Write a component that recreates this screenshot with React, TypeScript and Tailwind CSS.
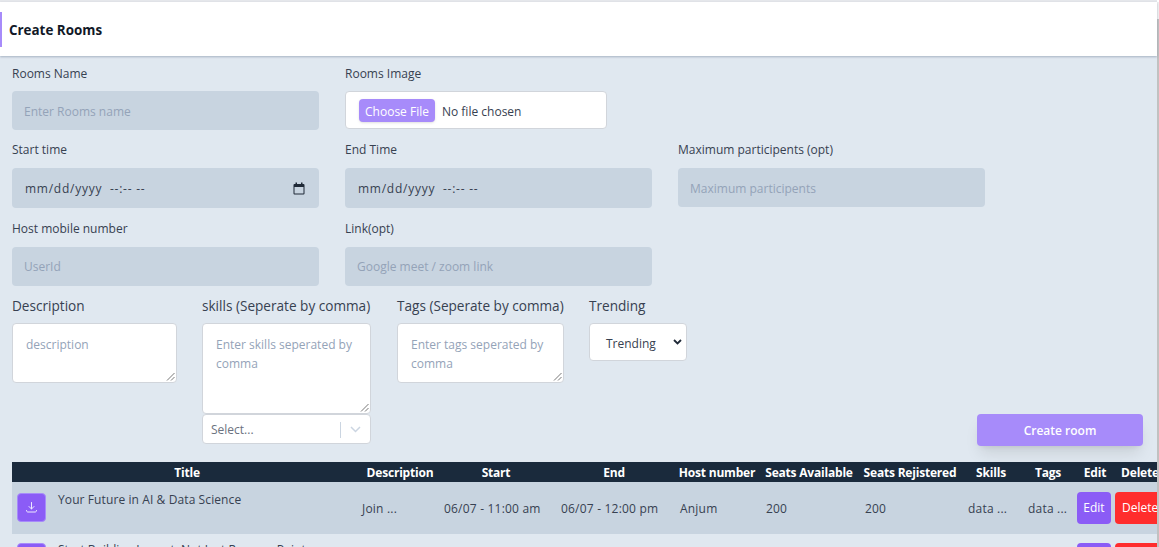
const labelCls = "block pt-[1px] -mb-[1px] text-[12px] leading-[18px] text-[#374151] whitespace-nowrap";
const inputCls = "rounded bg-[#c8d4e0] flex items-center px-3 text-[12px] text-[#94a3b8]";

const Field = ({ label, value, gap = "mt-[9px]", nudge = "pt-[3px]" }: { label: string; value: string; gap?: string; nudge?: string }) => (
  <div className="w-[307px]">
    <label className={labelCls}>{label}</label>
    <div className={`${gap} h-[39px] ${inputCls} ${nudge}`}>{value}</div>
  </div>
);

const DateField = ({ label, icon }: { label: string; icon?: boolean }) => (
  <div className="w-[307px]">
    <label className={labelCls}>{label}</label>
    <div className="mt-[10px] h-[40px] rounded bg-[#c8d4e0] flex items-center justify-between pl-[13px] pr-[14px] text-[12px] tracking-[0.75px] text-[#374151] whitespace-pre">
      <span className="pt-[2px]">mm/dd/yyyy  --:-- --</span>
      {icon && (
        <svg width="12" height="13" viewBox="0 0 12 13" fill="#1f2937">
          <path d="M2.500 0.500h1.500v1.500h4V0.500h1.500v1.500h1a1 1 0 0 1 1 1v8.500a1 1 0 0 1-1 1h-9a1 1 0 0 1-1-1V3a1 1 0 0 1 1-1h1zM1.500 5v6.500h9V5z" />
        </svg>
      )}
    </div>
  </div>
);

const TextArea = ({ label, placeholder, width, height }: { label: string; placeholder: string; width: string; height: string }) => (
  <div className={width}>
    <label className="block text-[13.600px] leading-[20px] text-[#374151] whitespace-nowrap">{label}</label>
    <div className={`relative mt-[7px] ${height} rounded bg-white border border-[#d1d5db] px-[13px] py-[11px] text-[12px] leading-[19px] text-[#94a3b8]`}>
      {placeholder}
      <svg className="absolute right-[1px] bottom-[1px]" width="9" height="9" viewBox="0 0 9 9" stroke="#555" strokeWidth="0.8">
        <path d="M1 8.500L8.500 1M5 8.500L8.500 5" />
      </svg>
    </div>
  </div>
);

const columns = [
  { name: "Title", width: "w-[350px]" },
  { name: "Description", width: "w-[76px]" },
  { name: "Start", width: "w-[116px]" },
  { name: "End", width: "w-[120px]" },
  { name: "Host number", width: "w-[86px]" },
  { name: "Seats Available", width: "w-[98px]" },
  { name: "Seats Rejistered", width: "w-[104px]" },
  { name: "Skills", width: "w-[58px]" },
  { name: "Tags", width: "w-[56px]" },
  { name: "Edit", width: "w-[38px]" },
  { name: "Delete", width: "w-[52px]" },
];

const cellCls = "shrink-0 pt-[2px] text-[12px] tracking-[0.2px] text-[#374151]";

const DownloadIcon = () => (
  <div className="w-[29px] h-[29px] rounded bg-[#8b5cf6] border border-[#a78bfa] flex items-center justify-center">
    <svg width="13" height="13" viewBox="0 0 13 13" fill="none" stroke="#ede9fe" strokeWidth="1" strokeLinecap="round" strokeLinejoin="round">
      <path d="M6.500 1.500v6.500M4 5.500l2.500 2.500 2.500-2.500M1.500 9.500c0 1 .5 1.500 1.500 1.500h7c1 0 1.500-.5 1.500-1.500" />
    </svg>
  </div>
);

export default function App() {
  return (
    <div className="relative h-[547px] w-[1159px] overflow-hidden bg-white font-['Open_Sans','Noto_Sans',sans-serif]">
      <div className="h-[2px] w-[1157px] bg-[#e5e7eb]" />
      <div className="h-[54px] w-[1157px] flex items-center bg-white shadow-[0_1px_2px_rgba(100,116,139,0.45)] relative z-10">
        <div className="h-[35px] w-[2px] bg-[#a78bfa] mr-[7px]" />
        <h1 className="text-[13.400px] font-bold text-[#111827] pt-[3px]">Create Rooms</h1>
      </div>
      <div className="h-[491px] w-[1157px] bg-[#e0e8f0] overflow-hidden">
        <div className="flex gap-[26px] pl-[12px] pt-[8px]">
          <Field label="Rooms Name" value="Enter Rooms name" />
          <div className="w-[262px]">
            <label className={labelCls}>Rooms Image</label>
            <div className="mt-[9px] h-[38px] rounded bg-white border border-[#d1d5db] flex items-center pl-[13px] pt-[1px] text-[12px] text-[#374151]">
              <span className="h-[23px] w-[76px] justify-center rounded-sm bg-[#a78bfa] pt-[2px] text-white flex items-center shadow-sm">Choose File</span>
              <span className="ml-[7px] pt-[2px]">No file chosen</span>
            </div>
          </div>
        </div>
        <div className="flex gap-[26px] pl-[12px] pt-[10px]">
          <DateField label="Start time" icon />
          <DateField label="End Time" />
          <Field label="Maximum participents (opt)" value="Maximum participents" gap="mt-[10px]" />
        </div>
        <div className="flex gap-[26px] pl-[12px] pt-[11px]">
          <Field label="Host mobile number" value="UserId" gap="mt-[10px]" nudge="pt-[1px]" />
          <Field label="Link(opt)" value="Google meet / zoom link" gap="mt-[10px]" nudge="pt-[1px]" />
        </div>
        <div className="flex pl-[12px] pt-[10px] h-[176px] relative">
          <TextArea label="Description" placeholder="description" width="w-[165px]" height="h-[60px]" />
          <div className="ml-[25px] w-[169px]">
            <TextArea label="skills (Seperate by comma)" placeholder="Enter skills seperated by comma" width="w-[169px]" height="h-[91px]" />
            <div className="h-[30px] rounded bg-white border border-[#d1d5db] flex items-center pl-[8px] pt-[1px] text-[12px] text-[#6b7280]">
              <span className="flex-1">Select...</span>
              <div className="h-[16px] w-px bg-[#cbd5e1]" />
              <svg className="mx-[9px]" width="11" height="7" viewBox="0 0 11 7" fill="none" stroke="#cbd5e1" strokeWidth="1.500">
                <path d="M1 1l4.500 4.500L10 1" />
              </svg>
            </div>
          </div>
          <TextArea label="Tags (Seperate by comma)" placeholder="Enter tags seperated by comma" width="ml-[26px] w-[167px]" height="h-[60px]" />
          <div className="ml-[25px] w-[98px]">
            <label className="block text-[13.600px] leading-[20px] text-[#374151]">Trending</label>
            <div className="mt-[7px] h-[38px] rounded bg-white border border-[#d1d5db] flex items-center pl-[16px] pr-[4px] justify-between text-[12px] text-[#374151]">
              <span className="pt-[3px]">Trending</span>
              <svg width="9" height="6" viewBox="0 0 9 6" fill="none" stroke="#1f2937" strokeWidth="1.800">
                <path d="M1 1l3.500 3.500L8 1" />
              </svg>
            </div>
          </div>
          <button className="absolute right-[14px] top-[128px] w-[166px] h-[32px] rounded bg-[#a78bfa] pt-[1px] text-white text-[12px] font-semibold shadow-lg">
            Create room
          </button>
        </div>
        <div className="ml-[12px] w-[1145px] overflow-hidden">
          <div className="flex h-[20px] bg-[#1a2a3c] items-center pt-[1px] text-[12px] font-bold tracking-[-0.2px] text-white whitespace-nowrap">
            {columns.map((col) => (
              <div key={col.name} className={`${col.width} shrink-0 text-center`}>{col.name}</div>
            ))}
          </div>
          <div className="flex h-[52px] bg-[#c8d4e0] items-center whitespace-nowrap">
            <div className="w-[350px] shrink-0 pl-[5px] flex gap-[12px] self-start pt-[11px]">
              <DownloadIcon />
              <span className="text-[12px] tracking-[0.1px] text-[#374151] -mt-[2px]">Your Future in AI & Data Science</span>
            </div>
            <div className={`${cellCls} w-[76px]`}>Join ...</div>
            <div className={`${cellCls} w-[116px] pl-[6px]`}>06/07 - 11:00 am</div>
            <div className={`${cellCls} w-[120px] pl-[7px]`}>06/07 - 12:00 pm</div>
            <div className={`${cellCls} w-[86px] pl-[6px]`}>Anjum</div>
            <div className={`${cellCls} w-[98px] pl-[6px]`}>200</div>
            <div className={`${cellCls} w-[104px] pl-[7px]`}>200</div>
            <div className={`${cellCls} w-[58px] pl-[6px]`}>data ...</div>
            <div className={`${cellCls} w-[56px] pl-[8px]`}>data ...</div>
            <div className="shrink-0 flex gap-[4px] pl-[1px] text-[12px] text-white">
              <span className="w-[34px] h-[32px] rounded bg-[#8b5cf6] flex items-center justify-center">Edit</span>
              <span className="w-[50px] h-[32px] rounded bg-[#ff2d2d] flex items-center pl-[7px]">Delete</span>
            </div>
          </div>
          <div className="flex h-[20px] pt-[9px] whitespace-nowrap">
            <div className="w-[350px] shrink-0 pl-[5px] flex gap-[12px]">
              <div className="w-[29px] h-[29px] rounded bg-[#8b5cf6] border border-[#a78bfa]" />
              <span className="text-[12px] text-[#374151] -mt-[2px]">Start Building Impact: Not Just Resume Points</span>
            </div>
            <div className="ml-[715px] flex gap-[4px]">
              <span className="w-[34px] h-[32px] rounded bg-[#8b5cf6]" />
              <span className="w-[50px] h-[32px] rounded bg-[#ff2d2d]" />
            </div>
          </div>
        </div>
      </div>
      <div className="absolute right-0 top-[2px] bottom-0 w-[2px] bg-[#f0f0f0]">
        <div className="mt-[17px] h-full w-full bg-[#c1c1c1]" />
      </div>
    </div>
  );
}
